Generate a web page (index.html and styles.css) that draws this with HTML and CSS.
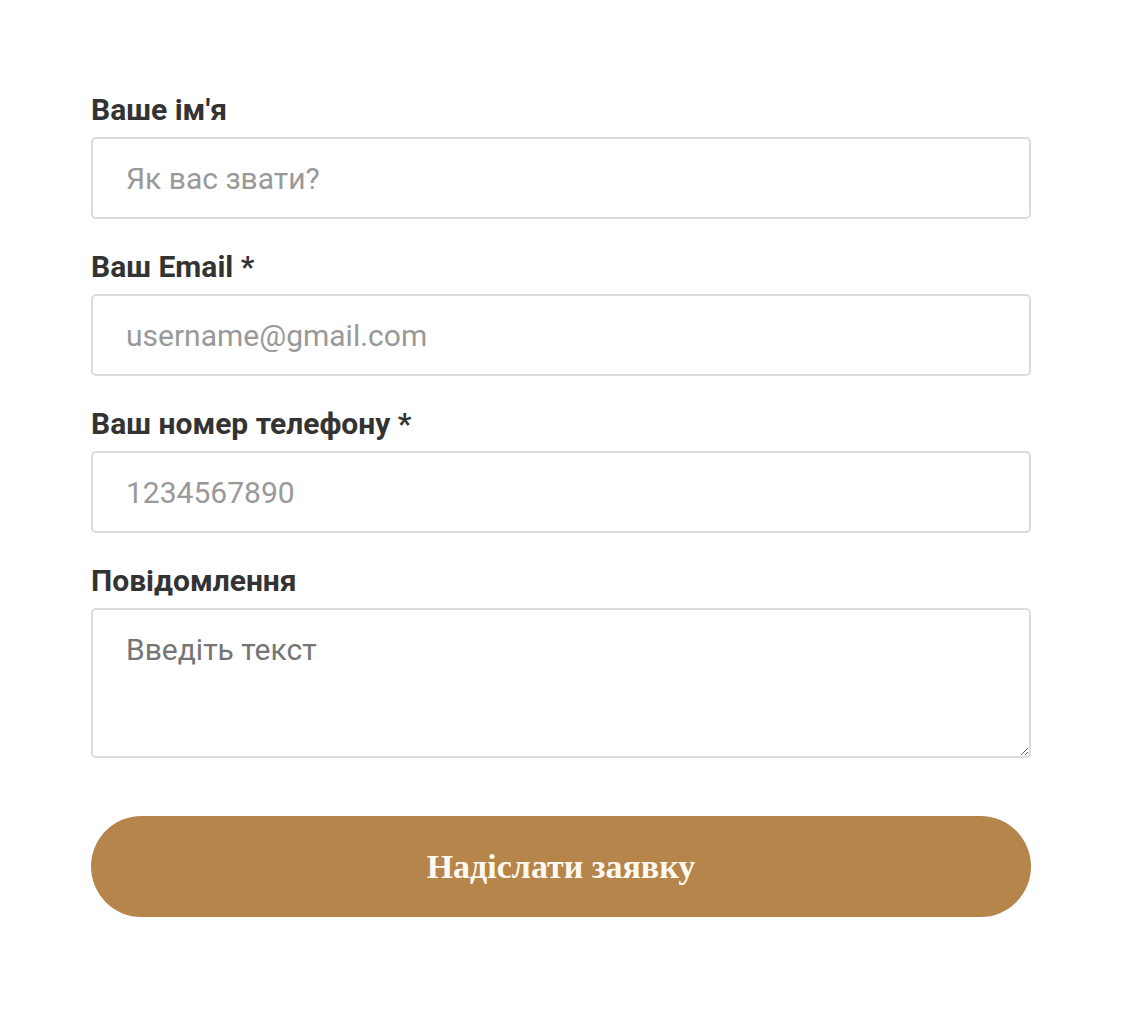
FILE: index.html
```html
<!DOCTYPE html>
<html lang="uk">
<head>
  <meta charset="UTF-8" />
  <meta name="viewport" content="width=device-width, initial-scale=1.0" />
  <title>Надіслати заявку</title>
  <link rel="stylesheet" href="styles.css">
</head>
<body>
  <main>
    <form class="contact-form" onsubmit="return false;">
      <div class="field">
        <label for="name">Ваше ім'я</label>
        <input id="name" type="text" placeholder="Як вас звати?">
      </div>
      <div class="field">
        <label for="email">Ваш Email *</label>
        <input id="email" type="email" placeholder="username@gmail.com">
      </div>
      <div class="field">
        <label for="phone">Ваш номер телефону *</label>
        <input id="phone" type="tel" placeholder="1234567890">
      </div>
      <div class="field">
        <label for="message">Повідомлення</label>
        <textarea id="message" placeholder="Введіть текст"></textarea>
      </div>
      <button type="submit" class="submit-button">Надіслати заявку</button>
    </form>
  </main>
</body>
</html>
```

FILE: styles.css
```css
body {
  font-family: Roboto, "Noto Sans", Arial, sans-serif;
  margin: 0;
  padding: 0;
  background: #fff;
  color: #333;
}
main {
  padding: 92px 0 0 91px;
}
.contact-form {
  width: 940px;
}
.field {
  margin-bottom: 30px;
}
.field label {
  display: block;
  font-size: 30px;
  font-weight: 700;
  line-height: 36px;
  margin-bottom: 9px;
  color: #333;
}
.field input,
.field textarea {
  display: block;
  box-sizing: border-box;
  width: 100%;
  height: 82px;
  padding: 0 33px;
  border: 2px solid #dcdcdc;
  border-radius: 5px;
  font-family: inherit;
  font-size: 30px;
  color: #333;
  background: #fff;
  outline: none;
}
.field input::placeholder {
  color: #999;
}
.field textarea {
  height: 150px;
  padding-top: 22px;
  resize: vertical;
}
.field textarea::placeholder {
  color: #757575;
}
.submit-button {
  display: block;
  width: 100%;
  height: 101px;
  margin-top: 58px;
  border: none;
  border-radius: 51px;
  background: #b5854b;
  color: #fdf8f0;
  font-family: "Liberation Serif", "DejaVu Serif", serif;
  font-size: 34px;
  font-weight: 700;
  cursor: pointer;
}
```
